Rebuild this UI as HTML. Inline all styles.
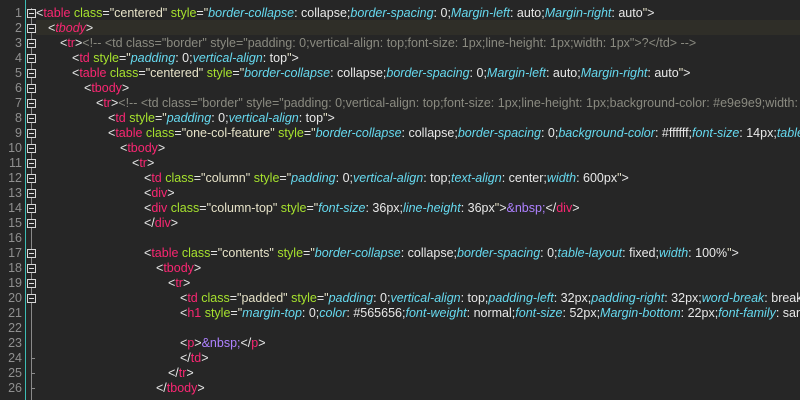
<!DOCTYPE html>
<html><head><meta charset="utf-8"><style>
html,body{margin:0;padding:0;background:#262626;width:800px;height:400px;overflow:hidden}
body{position:relative;font-family:"Liberation Sans","DejaVu Sans",sans-serif;font-size:12.5px}
#w{position:absolute;left:0;top:0;width:800px;height:400px;overflow:hidden}
.ln{position:absolute;left:0;width:22px;text-align:right;color:#8f8f8f;font-size:12.5px;height:15px;line-height:15px}
.l{position:absolute;left:36px;white-space:pre;color:#e8e8e8;height:15px;line-height:15px}
.hl{position:absolute;left:36px;right:0;top:20px;height:15px;background:#2f2e28}
.bar{position:absolute;left:25px;top:0;width:1px;height:400px;background:#3cbcb4}
.vl{position:absolute;left:31px;top:8px;width:1px;height:392px;background:#8a8a8a}
.box{position:absolute;left:27px;width:7px;height:7px;border:1px solid #d8d8d8;background:#262626}
.box:after{content:"";position:absolute;left:1px;top:3px;width:5px;height:1px;background:#e0e0e0}
.tk{position:absolute;left:31px;width:4px;height:1px;background:#8a8a8a}
.t{color:#f92672}.a{color:#a6e22e}.s{color:#e6e2c8}.p{color:#66d9ef;font-style:italic}.c{color:#8a8a80}.e{color:#ae81ff}.b{color:#e8e8e8}
</style></head><body><div id="w">
<div class="hl"></div>
<div class="bar"></div><div class="vl"></div>
<div class="ln" style="top:5.5px">1</div><div class="ln" style="top:20.5px">2</div><div class="ln" style="top:35.5px">3</div><div class="ln" style="top:50.5px">4</div><div class="ln" style="top:65.5px">5</div><div class="ln" style="top:80.5px">6</div><div class="ln" style="top:95.5px">7</div><div class="ln" style="top:110.5px">8</div><div class="ln" style="top:125.5px">9</div><div class="ln" style="top:140.5px">10</div><div class="ln" style="top:155.5px">11</div><div class="ln" style="top:170.5px">12</div><div class="ln" style="top:185.5px">13</div><div class="ln" style="top:200.5px">14</div><div class="ln" style="top:215.5px">15</div><div class="ln" style="top:230.5px">16</div><div class="ln" style="top:245.5px">17</div><div class="ln" style="top:260.5px">18</div><div class="ln" style="top:275.5px">19</div><div class="ln" style="top:290.5px">20</div><div class="ln" style="top:305.5px">21</div><div class="ln" style="top:320.5px">22</div><div class="ln" style="top:335.5px">23</div><div class="ln" style="top:350.5px">24</div><div class="ln" style="top:365.5px">25</div><div class="ln" style="top:380.5px">26</div>
<div class="box" style="top:9px"></div><div class="box" style="top:24px"></div><div class="box" style="top:39px"></div><div class="box" style="top:54px"></div><div class="box" style="top:69px"></div><div class="box" style="top:84px"></div><div class="box" style="top:99px"></div><div class="box" style="top:114px"></div><div class="box" style="top:129px"></div><div class="box" style="top:144px"></div><div class="box" style="top:159px"></div><div class="box" style="top:174px"></div><div class="box" style="top:189px"></div><div class="box" style="top:204px"></div><div class="box" style="top:219px"></div><div class="box" style="top:249px"></div><div class="box" style="top:264px"></div><div class="box" style="top:279px"></div><div class="box" style="top:294px"></div>
<div class="tk" style="top:358px"></div><div class="tk" style="top:373px"></div><div class="tk" style="top:388px"></div>

<div class="l" style="top:5.5px"><span class="b">&lt;</span><span class="t">table</span> <span class="a">class</span>=<span class="s">"centered"</span> <span class="a">style</span>=<span class="s">"</span><span class="p">border-collapse</span>: collapse;<span class="p">border-spacing</span>: 0;<span class="p">Margin-left</span>: auto;<span class="p">Margin-right</span>: auto<span class="s">"</span>&gt;</div>
<div class="l" style="top:20.5px;left:48px">&lt;<span class="t" style="font-style:italic">tbody</span>&gt;</div>
<div class="l" style="top:35.5px;left:60px">&lt;<span class="t">tr</span>&gt;<span class="c">&lt;!-- &lt;td class="border" style="padding: 0;vertical-align: top;font-size: 1px;line-height: 1px;width: 1px"&gt;?&lt;/td&gt; --&gt;</span></div>
<div class="l" style="top:50.5px;left:72px">&lt;<span class="t">td</span> <span class="a">style</span>=<span class="s">"</span><span class="p">padding</span>: 0;<span class="p">vertical-align</span>: top<span class="s">"</span>&gt;</div>
<div class="l" style="top:65.5px;left:72px">&lt;<span class="t">table</span> <span class="a">class</span>=<span class="s">"centered"</span> <span class="a">style</span>=<span class="s">"</span><span class="p">border-collapse</span>: collapse;<span class="p">border-spacing</span>: 0;<span class="p">Margin-left</span>: auto;<span class="p">Margin-right</span>: auto<span class="s">"</span>&gt;</div>
<div class="l" style="top:80.5px;left:84px">&lt;<span class="t">tbody</span>&gt;</div>
<div class="l" style="top:95.5px;left:96px">&lt;<span class="t">tr</span>&gt;<span class="c">&lt;!-- &lt;td class="border" style="padding: 0;vertical-align: top;font-size: 1px;line-height: 1px;background-color: #e9e9e9;width: 1px"&gt;</span></div>
<div class="l" style="top:110.5px;left:108px">&lt;<span class="t">td</span> <span class="a">style</span>=<span class="s">"</span><span class="p">padding</span>: 0;<span class="p">vertical-align</span>: top<span class="s">"</span>&gt;</div>
<div class="l" style="top:125.5px;left:108px">&lt;<span class="t">table</span> <span class="a">class</span>=<span class="s">"one-col-feature"</span> <span class="a">style</span>=<span class="s">"</span><span class="p">border-collapse</span>: collapse;<span class="p">border-spacing</span>: 0;<span class="p">background-color</span>: #ffffff;<span class="p">font-size</span>: 14px;<span class="p">table-layout</span>: fixed</div>
<div class="l" style="top:140.5px;left:120px">&lt;<span class="t">tbody</span>&gt;</div>
<div class="l" style="top:155.5px;left:132px">&lt;<span class="t">tr</span>&gt;</div>
<div class="l" style="top:170.5px;left:144px">&lt;<span class="t">td</span> <span class="a">class</span>=<span class="s">"column"</span> <span class="a">style</span>=<span class="s">"</span><span class="p">padding</span>: 0;<span class="p">vertical-align</span>: top;<span class="p">text-align</span>: center;<span class="p">width</span>: 600px<span class="s">"</span>&gt;</div>
<div class="l" style="top:185.5px;left:144px">&lt;<span class="t">div</span>&gt;</div>
<div class="l" style="top:200.5px;left:144px">&lt;<span class="t">div</span> <span class="a">class</span>=<span class="s">"column-top"</span> <span class="a">style</span>=<span class="s">"</span><span class="p">font-size</span>: 36px;<span class="p">line-height</span>: 36px<span class="s">"</span>&gt;<span class="e">&amp;nbsp;</span>&lt;/<span class="t">div</span>&gt;</div>
<div class="l" style="top:215.5px;left:144px">&lt;/<span class="t">div</span>&gt;</div>
<div class="l" style="top:245.5px;left:144px">&lt;<span class="t">table</span> <span class="a">class</span>=<span class="s">"contents"</span> <span class="a">style</span>=<span class="s">"</span><span class="p">border-collapse</span>: collapse;<span class="p">border-spacing</span>: 0;<span class="p">table-layout</span>: fixed;<span class="p">width</span>: 100%<span class="s">"</span>&gt;</div>
<div class="l" style="top:260.5px;left:156px">&lt;<span class="t">tbody</span>&gt;</div>
<div class="l" style="top:275.5px;left:168px">&lt;<span class="t">tr</span>&gt;</div>
<div class="l" style="top:290.5px;left:180px">&lt;<span class="t">td</span> <span class="a">class</span>=<span class="s">"padded"</span> <span class="a">style</span>=<span class="s">"</span><span class="p">padding</span>: 0;<span class="p">vertical-align</span>: top;<span class="p">padding-left</span>: 32px;<span class="p">padding-right</span>: 32px;<span class="p">word-break</span>: break-word</div>
<div class="l" style="top:305.5px;left:180px">&lt;<span class="t">h1</span> <span class="a">style</span>=<span class="s">"</span><span class="p">margin-top</span>: 0;<span class="p">color</span>: #565656;<span class="p">font-weight</span>: normal;<span class="p">font-size</span>: 52px;<span class="p">Margin-bottom</span>: 22px;<span class="p">font-family</span>: sans-serif</div>
<div class="l" style="top:335.5px;left:180px">&lt;<span class="t">p</span>&gt;<span class="e">&amp;nbsp;</span>&lt;/<span class="t">p</span>&gt;</div>
<div class="l" style="top:350.5px;left:180px">&lt;/<span class="t">td</span>&gt;</div>
<div class="l" style="top:365.5px;left:168px">&lt;/<span class="t">tr</span>&gt;</div>
<div class="l" style="top:380.5px;left:156px">&lt;/<span class="t">tbody</span>&gt;</div>
</div></body></html>
